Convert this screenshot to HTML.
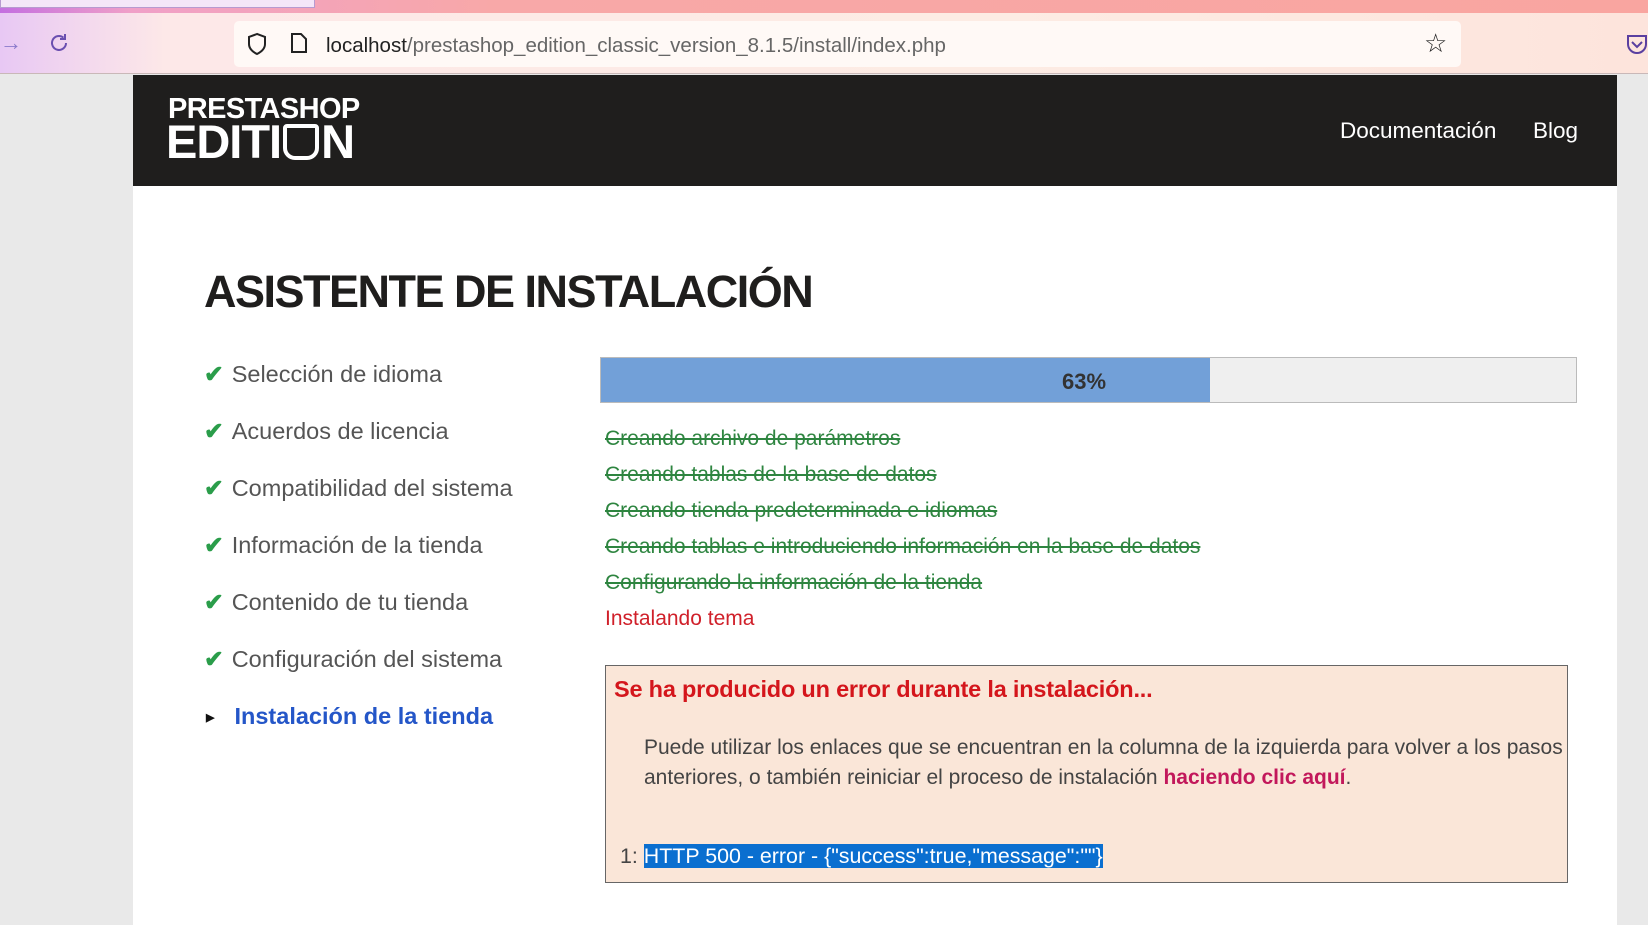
<!DOCTYPE html>
<html><head><meta charset="utf-8">
<style>
*{margin:0;padding:0;box-sizing:border-box}
body{width:1648px;height:925px;overflow:hidden;background:#e9e9e9;font-family:"Liberation Sans",sans-serif;position:relative}
.abs{position:absolute;white-space:nowrap}
</style></head><body>
<div class="abs" style="left:0;top:0;width:1648px;height:13px;background:linear-gradient(90deg,#c46fe0 0,#f0a0c8 8%,#f8a8a8 30%,#f9a5a0 100%)"></div>
<div class="abs" style="left:0;top:0;width:315px;height:8px;background:#f4e6f8;border:1px solid #b79ad0;border-top:none"></div>
<div class="abs" style="left:0;top:13px;width:1648px;height:61px;background:linear-gradient(90deg,#e8c8f4 0,#fde8e8 10%,#fdece4 60%,#fde4dc 100%);border-bottom:1px solid #c9b8b8"></div>
<div class="abs" style="left:0;top:30px;color:#8a7acb;font-size:22px">→</div>
<svg class="abs" style="left:47px;top:31px" width="24" height="24" viewBox="0 0 24 24"><path d="M19 12a7 7 0 1 1-2.5-5.4M18 3v5h-5" fill="none" stroke="#6a4fb0" stroke-width="2"/></svg>
<div class="abs" style="left:234px;top:21px;width:1227px;height:46px;background:#fff9f6;border-radius:5px"></div>
<svg class="abs" style="left:246px;top:32px" width="22" height="24" viewBox="0 0 22 24"><path d="M11 2L3 5v7c0 5 4 8 8 10 4-2 8-5 8-10V5z" fill="none" stroke="#222" stroke-width="2"/></svg>
<svg class="abs" style="left:290px;top:32px" width="18" height="22" viewBox="0 0 18 22"><path d="M2 2h9l5 5v13H2z" fill="none" stroke="#222" stroke-width="2"/></svg>
<div class="abs" style="left:326px;top:34px;font-size:20.5px;color:#222">localhost<span style="color:#666">/prestashop_edition_classic_version_8.1.5/install/index.php</span></div>
<div class="abs" style="left:1424px;top:28px;font-size:26px;color:#222">☆</div>
<svg class="abs" style="left:1626px;top:33px" width="22" height="22" viewBox="0 0 22 22"><path d="M2 3h18v8a9 9 0 0 1-18 0z M6 9l5 5 5-5" fill="none" stroke="#5a3fa0" stroke-width="2"/></svg>

<div class="abs" style="left:133px;top:75px;width:1484px;height:850px;background:#fff"></div>
<div class="abs" style="left:133px;top:75px;width:1484px;height:111px;background:#1f1e1d"></div>
<div class="abs" style="left:168px;top:93px;color:#fff;font-weight:900;font-size:29px;letter-spacing:-0.6px;line-height:32px">PRESTASHOP</div>
<div class="abs" style="left:166px;top:118px;color:#fff;font-weight:900;font-size:47px;letter-spacing:-1px;line-height:48px">EDITI<span style="display:inline-block;width:36px;height:36px;border:4px solid #fff;border-radius:4px 4px 12px 12px;vertical-align:-2px;margin:0 2px"></span>N</div>
<div class="abs" style="left:1340px;top:118px;color:#fff;font-size:22.5px">Documentación</div>
<div class="abs" style="left:1533px;top:118px;color:#fff;font-size:22.5px">Blog</div>

<div class="abs" style="left:204px;top:266px;font-size:45px;font-weight:900;color:#1f1e1d;letter-spacing:-1.5px">ASISTENTE DE INSTALACIÓN</div>

<div class="abs" style="left:204px;top:346px;font-size:23.5px;color:#555;line-height:57px">
<div><span style="color:#2a9d4a;font-weight:bold;margin-right:8px">✔</span>Selección de idioma</div>
<div><span style="color:#2a9d4a;font-weight:bold;margin-right:8px">✔</span>Acuerdos de licencia</div>
<div><span style="color:#2a9d4a;font-weight:bold;margin-right:8px">✔</span>Compatibilidad del sistema</div>
<div><span style="color:#2a9d4a;font-weight:bold;margin-right:8px">✔</span>Información de la tienda</div>
<div><span style="color:#2a9d4a;font-weight:bold;margin-right:8px">✔</span>Contenido de tu tienda</div>
<div><span style="color:#2a9d4a;font-weight:bold;margin-right:8px">✔</span>Configuración del sistema</div>
<div style="color:#2456c8;font-weight:bold"><span style="color:#111;font-size:11px;margin:0 20px 0 2px;vertical-align:3px">▶</span>Instalación de la tienda</div>
</div>

<div class="abs" style="left:600px;top:357px;width:977px;height:46px;background:#efefef;border:1px solid #bbb"></div>
<div class="abs" style="left:601px;top:358px;width:609px;height:44px;background:#72a0d8"></div>
<div class="abs" style="left:1062px;top:369px;font-size:22px;font-weight:bold;color:#333">63%</div>

<div class="abs" style="left:605px;top:421px;font-size:21px;line-height:36px;color:#2e8540">
<div style="text-decoration:line-through">Creando archivo de parámetros</div>
<div style="text-decoration:line-through">Creando tablas de la base de datos</div>
<div style="text-decoration:line-through">Creando tienda predeterminada e idiomas</div>
<div style="text-decoration:line-through">Creando tablas e introduciendo información en la base de datos</div>
<div style="text-decoration:line-through">Configurando la información de la tienda</div>
<div style="color:#d0202a">Instalando tema</div>
</div>

<div class="abs" style="left:605px;top:665px;width:963px;height:218px;background:#fae6d8;border:1px solid #666"></div>
<div class="abs" style="left:614px;top:676px;font-size:23.5px;font-weight:bold;color:#d4161c;letter-spacing:-0.2px">Se ha producido un error durante la instalación...</div>
<div class="abs" style="left:644px;top:733px;font-size:21px;line-height:30px;color:#444">Puede utilizar los enlaces que se encuentran en la columna de la izquierda para volver a los pasos<br>anteriores, o también reiniciar el proceso de instalación <b style="color:#c2185b">haciendo clic aquí</b>.</div>
<div class="abs" style="left:620px;top:844px;font-size:21.4px;color:#444">1: <span style="background:#0a6fd0;color:#fff">HTTP 500 - error - {"success":true,"message":""}</span></div>
</body></html>
